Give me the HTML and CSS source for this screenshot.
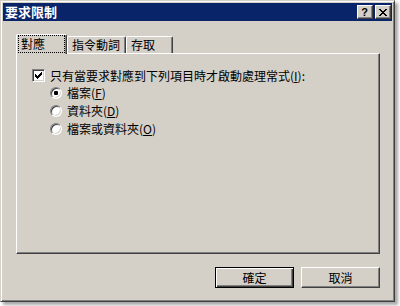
FILE: index.html
```html
<!DOCTYPE html>
<html lang="zh-Hant">
<head>
<meta charset="utf-8">
<title>要求限制</title>
<link rel="stylesheet" href="styles.css">
</head>
<body>
<div class="window">
  <div class="titlebar">
    <span class="title">要求限制</span>
    <div class="tb-buttons">
      <div class="tb-btn help">?</div>
      <div class="tb-btn close">
        <svg width="8" height="7" viewBox="0 0 8 7" shape-rendering="crispEdges"><path d="M0 0h2v1h-2z M1 1h2v1h-2z M2 2h4v1h-4z M3 3h2v1h-2z M2 4h4v1h-4z M1 5h2v1h-2z M0 6h2v1h-2z M6 0h2v1h-2z M5 1h2v1h-2z M5 5h2v1h-2z M6 6h2v1h-2z" fill="#000"/></svg>
      </div>
    </div>
  </div>
  <div class="client">
    <div class="tabs">
      <div class="tab active"><span class="focus">對應</span></div>
      <div class="tab t2">指令動詞</div>
      <div class="tab t3">存取</div>
    </div>
    <div class="panel">
      <div class="check-row">
        <span class="checkbox">
          <svg width="7" height="7" viewBox="0 0 7 7" shape-rendering="crispEdges"><path d="M0 2h1v3h-1z M1 3h1v3h-1z M2 4h1v3h-1z M3 3h1v3h-1z M4 2h1v3h-1z M5 1h1v3h-1z M6 0h1v3h-1z" fill="#000"/></svg>
        </span>
        <span class="label">只有當要求對應到下列項目時才啟動處理常式(<u>I</u>):</span>
      </div>
      <div class="radios">
        <div class="radio-row"><span class="radio checked"></span><span class="label">檔案(<u>F</u>)</span></div>
        <div class="radio-row"><span class="radio"></span><span class="label">資料夾(<u>D</u>)</span></div>
        <div class="radio-row"><span class="radio"></span><span class="label">檔案或資料夾(<u>O</u>)</span></div>
      </div>
    </div>
    <div class="buttons">
      <div class="btn default">確定</div>
      <div class="btn">取消</div>
    </div>
  </div>
</div>
</body>
</html>
```
FILE: styles.css
```css
* { box-sizing: border-box; }
html, body { margin: 0; padding: 0; }
body {
  width: 400px;
  height: 306px;
  background: #ffffff;
  font-family: "Noto Sans CJK TC", "Liberation Sans", sans-serif;
  font-size: 12px;
  color: #000;
  overflow: hidden;
}
.window {
  width: 395px;
  height: 302px;
  background: #d4d0c8;
  border: 1px solid;
  border-color: #d4d0c8 #404040 #404040 #d4d0c8;
  box-shadow: inset 1px 1px #ffffff, inset -1px -1px #808080, 3px 3px 3px rgba(0,0,0,0.35);
  padding: 2px;
  display: flex;
  flex-direction: column;
}
.titlebar {
  height: 18px;
  background: #0a246a;
  display: flex;
  align-items: center;
  justify-content: space-between;
  padding: 0 1px 0 2px;
}
.title {
  color: #fff;
  font-weight: bold;
  font-size: 13px;
  line-height: 18px;
}
.tb-buttons { display: flex; gap: 2px; }
.tb-btn {
  width: 16px;
  height: 14px;
  background: #d4d0c8;
  border: 1px solid;
  border-color: #ffffff #404040 #404040 #ffffff;
  box-shadow: inset -1px -1px #808080;
  display: flex;
  align-items: center;
  justify-content: center;
}
.help {
  font-family: "Liberation Sans", sans-serif;
  font-weight: bold;
  font-size: 11px;
  line-height: 12px;
  padding-right: 1px;
}
.close svg { display: block; margin-right: 1px; }
.client {
  flex: 1;
  padding: 13px 12px 0 13px;
  display: flex;
  flex-direction: column;
}
.tabs {
  display: flex;
  align-items: flex-end;
  height: 19px;
}
.tab {
  height: 17px;
  border-top: 1px solid #ffffff;
  border-left: 1px solid #ffffff;
  border-right: 1px solid #404040;
  box-shadow: inset -1px 0 #808080;
  border-top-left-radius: 2px;
  border-top-right-radius: 2px;
  padding-left: 4px;
  line-height: 15px;
  white-space: nowrap;
}
.tab.t2 { width: 59px; }
.tab.t3 { width: 47px; }
.tab.active {
  width: 51px;
  height: 20px;
  margin-bottom: -1px;
  position: relative;
  z-index: 1;
  background: #d4d0c8;
  padding: 0 1px;
}
.focus {
  display: block;
  height: 18px;
  border: 1px dotted #000;
  padding-left: 2px;
  line-height: 15px;
}
.panel {
  width: 364px;
  height: 201px;
  border: 1px solid;
  border-color: #ffffff #404040 #404040 #ffffff;
  box-shadow: inset -1px -1px #808080;
  padding: 15px 0 0 15px;
}
.label { line-height: 14px; white-space: nowrap; }
.check-row {
  display: flex;
  align-items: center;
  gap: 5px;
  height: 13px;
}
.checkbox {
  width: 13px;
  height: 13px;
  flex: none;
  background: #fff;
  border: 1px solid;
  border-color: #808080 #ffffff #ffffff #808080;
  box-shadow: inset 1px 1px #404040, inset -1px -1px #d4d0c8;
  padding: 2px 0 0 2px;
}
.checkbox svg { display: block; }
.radios {
  margin-left: 18px;
  margin-top: 2px;
}
.radio-row {
  display: flex;
  align-items: center;
  gap: 5px;
  height: 18px;
}
.radio {
  width: 12px;
  height: 12px;
  flex: none;
  border-radius: 50%;
  background: #fff;
  border: 1px solid;
  border-color: #808080 #ffffff #ffffff #808080;
  box-shadow: inset 1px 1px #404040, inset -1px -1px #d4d0c8;
  display: flex;
  align-items: center;
  justify-content: center;
}
.radio.checked::after {
  content: "";
  width: 4px;
  height: 4px;
  background: #000;
  border-radius: 1px;
}
.buttons {
  display: flex;
  justify-content: flex-end;
  gap: 7px;
  margin-top: 13px;
}
.btn {
  width: 79px;
  height: 21px;
  border: 1px solid;
  border-color: #ffffff #404040 #404040 #ffffff;
  box-shadow: inset -1px -1px #808080;
  display: flex;
  align-items: center;
  justify-content: center;
  line-height: 14px;
}
.btn.default {
  border-color: #000;
  box-shadow: inset 1px 1px #ffffff, inset -1px -1px #404040, inset -2px -2px #808080;
}
```
